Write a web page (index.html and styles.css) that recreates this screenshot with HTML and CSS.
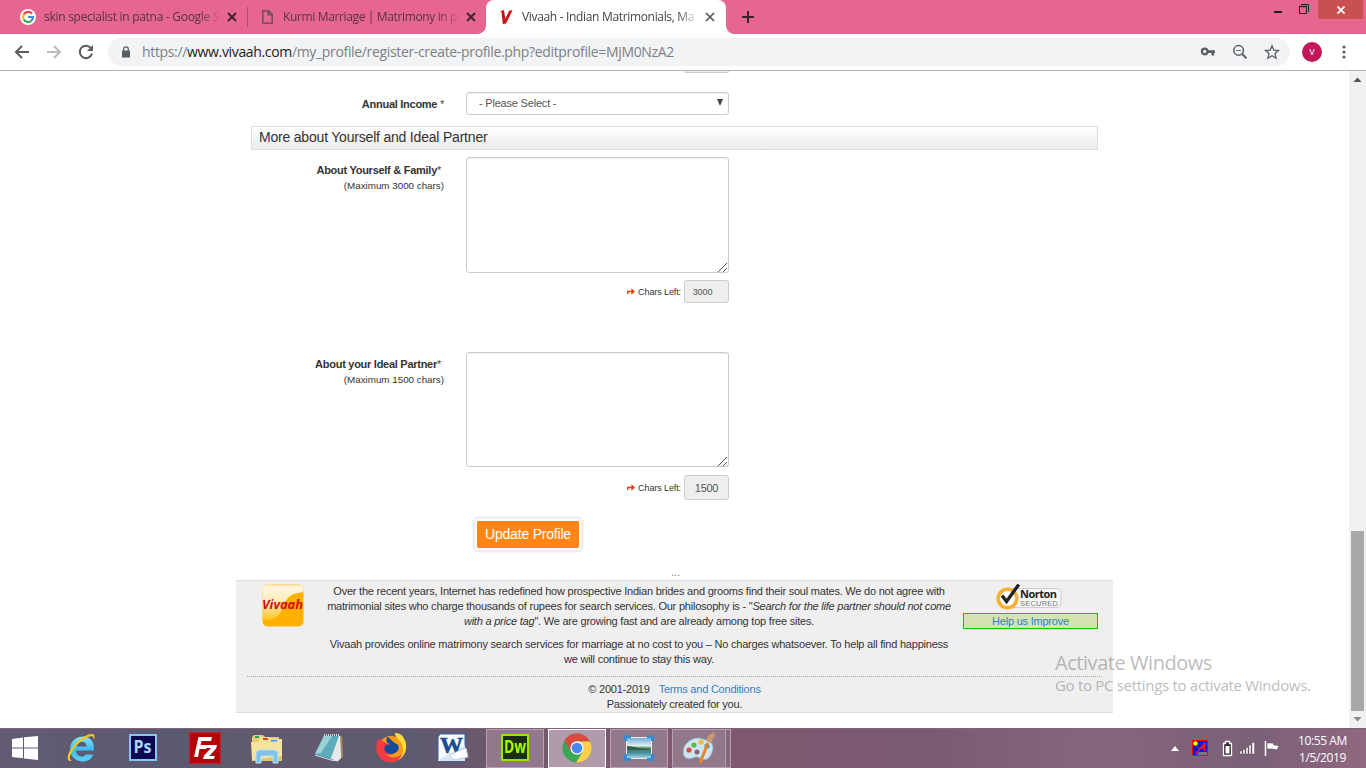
FILE: index.html
```html
<!DOCTYPE html>
<html lang="en">
<head>
<meta charset="utf-8">
<title>Vivaah - Indian Matrimonials</title>
<link rel="stylesheet" href="styles.css">
</head>
<body>
<header class="tabs">
  <div class="tab tab-one">
    <svg width="16" height="16" viewBox="0 0 16 16"><circle cx="8" cy="8" r="8" fill="#fff"/><g fill="none" stroke-width="2.2"><path d="M12 4.6A5 5 0 0 0 3.7 5.5" stroke="#ea4335"/><path d="M3.7 5.5a5 5 0 0 0 0 5" stroke="#fbbc05"/><path d="M3.7 10.5a5 5 0 0 0 7.7 1.2" stroke="#34a853"/><path d="M11.4 11.7A5 5 0 0 0 13 8H8" stroke="#4285f4"/></g></svg>
    <span class="tab-title t1">skin specialist in patna - Google S</span>
    <svg class="x" width="10" height="10" viewBox="0 0 10 10"><path d="M1 1l8 8M9 1L1 9" stroke="#3c2530" stroke-width="2"/></svg>
  </div>
  <div class="tab tab-two">
    <svg width="11" height="14" viewBox="0 0 11 14"><path d="M.8.8h5.7l3.7 3.7v8.7H.8zM6.3.8v4h4" fill="none" stroke="#5c4b53" stroke-width="1.3"/></svg>
    <span class="tab-title t2">Kurmi Marriage | Matrimony in pa</span>
    <svg class="x" width="10" height="10" viewBox="0 0 10 10"><path d="M1 1l8 8M9 1L1 9" stroke="#3c2530" stroke-width="2"/></svg>
  </div>
  <div class="tab tab-active">
    <svg width="13" height="14" viewBox="0 0 13 14"><path d="M0 1.4L4 0l1.3 8.8L9.4.6l3.1-.4L6 13.5 2.8 14 1.5 2z" fill="#d00d12"/></svg>
    <span class="tab-title t3">Vivaah - Indian Matrimonials, Ma</span>
    <svg class="x" width="10" height="10" viewBox="0 0 10 10"><path d="M1 1l8 8M9 1L1 9" stroke="#555" stroke-width="1.7"/></svg>
  </div>
  <svg class="plus" width="12" height="12" viewBox="0 0 12 12"><path d="M6 0v12M0 6h12" stroke="#38242d" stroke-width="2"/></svg>
  <div class="window-controls">
    <svg width="44" height="20" viewBox="0 0 44 20"><path d="M0 12h8" stroke="#222" stroke-width="2"/><path d="M25.5 6.500h7v7h-7z" fill="none" stroke="#222"/><path d="M25 6.500h8" stroke="#222" stroke-width="1.400"/><path d="M27 4.500h7.500V12" fill="none" stroke="#222"/></svg>
    <div class="win-close"><svg width="8" height="8" viewBox="0 0 8 8"><path d="M.5.5l7 7m0-7l-7 7" stroke="#fff" stroke-width="1.8"/></svg></div>
  </div>
</header>
<nav class="toolbar">
  <svg width="16" height="16" viewBox="0 0 16 16"><path d="M15 8H2.500M8 2L2 8l6 6" fill="none" stroke="#5a5d61" stroke-width="2"/></svg>
  <svg width="16" height="16" viewBox="0 0 16 16"><path d="M1 8h12.500M8 2l6 6-6 6" fill="none" stroke="#babcbe" stroke-width="2"/></svg>
  <svg width="16" height="16" viewBox="0 0 16 16"><path d="M13.2 4.500A6.200 6.200 0 1 0 14 9.500" fill="none" stroke="#5a5d61" stroke-width="2"/><path d="M15 1v6H9z" fill="#5a5d61"/></svg>
  <div class="omnibox">
    <svg class="lock" width="10" height="12" viewBox="0 0 10 12"><path d="M1 4.500h8V11.500H1z" fill="#5a5d61"/><path d="M2.700 5V3.200a2.300 2.300 0 0 1 4.600 0V5" fill="none" stroke="#5a5d61" stroke-width="1.3"/></svg>
    <span class="url">https://<b>www.vivaah.com</b>/my_profile/register-create-profile.php?editprofile=MjM0NzA2</span>
    <div class="box-icons">
      <svg width="16" height="16" viewBox="0 0 16 16"><circle cx="4.700" cy="7.500" r="2.800" fill="none" stroke="#5a5d61" stroke-width="2.200"/><path d="M7.500 7.600h7.500M12.800 7.600v3.800" fill="none" stroke="#5a5d61" stroke-width="2.600"/></svg>
      <svg width="16" height="16" viewBox="0 0 16 16"><circle cx="6.600" cy="6.400" r="4.800" fill="none" stroke="#5a5d61" stroke-width="1.500"/><path d="M10.200 10l4.300 4.400" stroke="#5a5d61" stroke-width="2"/><path d="M4.300 6.400h4.600" stroke="#5a5d61"/></svg>
      <svg width="16" height="16" viewBox="0 0 16 16"><path d="M8 1.800l1.800 4.300 4.700.4-3.500 3.100 1 4.600L8 11.800l-4 2.400 1-4.600-3.500-3.100 4.700-.4z" fill="none" stroke="#5a5d61" stroke-width="1.300"/></svg>
    </div>
  </div>
  <div class="avatar">v</div>
  <svg class="dots" width="4" height="14" viewBox="0 0 4 14"><g fill="#5a5d61"><circle cx="2" cy="2" r="1.600"/><circle cx="2" cy="7" r="1.600"/><circle cx="2" cy="12" r="1.600"/></g></svg>
</nav>
<div class="view">
  <main class="page">
    <form class="form">
      <div class="cut"></div>
      <div class="row income"><label>Annual Income <i>*</i></label><div class="select"><span>- Please Select -</span><svg width="6" height="7" viewBox="0 0 6 7"><path d="M0 0h6L3 7z" fill="#444"/></svg></div></div>
      <h2 class="heading"><span>More about Yourself and Ideal Partner</span></h2>
      <div class="row"><label class="area-label"><span class="l1">About Yourself &amp; Family<i>*</i></span><small>(Maximum 3000 chars)</small></label><div class="area a1"><svg width="9" height="9" viewBox="0 0 9 9"><path d="M0 9L9 0M5 9l4-4" stroke="#555"/></svg></div></div>
      <div class="chars c1"><svg width="8" height="7" viewBox="0 0 8 7"><path d="M.7 6V3.500H5" fill="none" stroke="#f4380e" stroke-width="1.400"/><path d="M4.400.300L8 3.500 4.400 6.700z" fill="#f4380e"/></svg><span>Chars Left:</span><output>3000</output></div>
      <div class="row second"><label class="area-label"><span class="l2">About your Ideal Partner<i>*</i></span><small>(Maximum 1500 chars)</small></label><div class="area a2"><svg width="9" height="9" viewBox="0 0 9 9"><path d="M0 9L9 0M5 9l4-4" stroke="#555"/></svg></div></div>
      <div class="chars c2"><svg width="8" height="7" viewBox="0 0 8 7"><path d="M.7 6V3.500H5" fill="none" stroke="#f4380e" stroke-width="1.400"/><path d="M4.400.300L8 3.500 4.400 6.700z" fill="#f4380e"/></svg><span>Chars Left:</span><output>1500</output></div>
      <button class="update" type="button"><span>Update Profile</span></button>
    </form>
    <div class="ellipsis">...</div>
    <footer class="footer">
      <div class="foot-top">
        <svg class="logo" width="42" height="44" viewBox="0 0 42 44"><defs><linearGradient id="lg" x2="0" y2="1"><stop offset="0" stop-color="#ffe0a0"/><stop offset=".1" stop-color="#fff6e0"/><stop offset=".55" stop-color="#ffe9b0"/><stop offset="1" stop-color="#ffc31c"/></linearGradient><clipPath id="lc"><rect x=".5" y=".5" width="41" height="42" rx="5"/></clipPath></defs><g clip-path="url(#lc)"><rect width="42" height="44" fill="#ffb000"/><path d="M0 0h42v8C27 9 23 16 20 25 17 34 10 37 0 36z" fill="url(#lg)"/></g><text x="0" y="24.500" class="logo-text" textLength="41" lengthAdjust="spacingAndGlyphs">Vivaah</text></svg>
        <div class="about">
          <p>Over the recent years, Internet has redefined how prospective Indian brides and grooms find their soul mates. We do not agree with<br>matrimonial sites who charge thousands of rupees for search services. Our philosophy is - "<em>Search for the life partner should not come</em><br><em>with a price tag</em>". We are growing fast and are already among top free sites.</p>
          <p>Vivaah provides online matrimony search services for marriage at no cost to you – No charges whatsoever. To help all find happiness<br>we will continue to stay this way.</p>
        </div>
        <div class="trust">
          <svg class="norton" width="66" height="26" viewBox="0 0 66 26"><path d="M12 4.500h49a4 4 0 0 1 4 4v11a4 4 0 0 1-4 4H12z" fill="#f7f7f7" stroke="#ccc"/><circle cx="11.500" cy="14.500" r="9.300" fill="#fff" stroke="#fbb034" stroke-width="3.600"/><path d="M6 11.500l4.500 6L22.800.5" fill="none" stroke="#222" stroke-width="3.300"/><text x="24" y="13.500" class="n1" textLength="37">Norton</text><text x="24" y="21.500" class="n2" textLength="38">SECURED</text></svg>
          <a class="improve">Help us Improve</a>
        </div>
      </div>
      <div class="legal"><div><span>© 2001-2019</span><a class="terms">Terms and Conditions</a></div><span>Passionately created for you.</span></div>
    </footer>
  </main>
  <aside class="scroll"><svg width="9" height="5" viewBox="0 0 9 5"><path d="M.5 5h8l-4-4.500z" fill="#505050"/></svg><div class="thumb"></div><svg width="9" height="5" viewBox="0 0 9 5"><path d="M.5 0h8l-4 4.500z" fill="#888"/></svg></aside>
</div>
<footer class="taskbar">
  <div class="start"><svg width="26" height="24" viewBox="0 0 26 24"><path d="M0 3l11-1.500V11.500H0zM12 1.300L26 0v11.500H12zM0 12.500h11v9.800L0 21zM12 12.500h14V24l-14-1.600z" fill="#fff"/></svg></div>
  <div class="app"><svg width="32" height="32" viewBox="0 0 32 32"><defs><linearGradient id="ie" x2="0" y2="1"><stop offset="0" stop-color="#8ce4ff"/><stop offset=".5" stop-color="#3cbcf0"/><stop offset="1" stop-color="#58d0f8"/></linearGradient></defs><path d="M11 18.500h17.700C30 10 25 4.500 18 4.500S5 9.500 5 17s6 12.500 12.500 12.500c5.500 0 9-2.500 10.800-7H20.500c-1 1.500-2 2-3.500 2-3.500 0-5.800-2.500-6-6zm.6-4c.7-3 2.900-4.700 5.400-4.700s4.500 1.700 4.800 4.700z" fill="url(#ie)"/><path d="M7 28.500C2 31 1 24 6 17 12 8 22 1 28 2c2 1 2 3 .8 6 .3-3-1-4.500-3.800-3.500C19 6 12 12 8 18c-4 6-4 10-1 10.500z" fill="#f9c71c"/></svg></div>
  <div class="app"><svg width="28" height="28" viewBox="0 0 28 28"><rect width="28" height="27" fill="#86c6f7"/><rect x="2" y="2" width="24" height="23" fill="#10084e"/><text class="ps" x="4.500" y="19" textLength="18" lengthAdjust="spacingAndGlyphs">Ps</text></svg></div>
  <div class="app"><svg width="32" height="32" viewBox="0 0 32 32"><rect x=".8" y=".8" width="30.400" height="30.400" fill="#b20508" stroke="#d51319" stroke-width="1.600" stroke-dasharray="2 1"/><path d="M9.500 5H23l-1 4h-9.500l-1 4H18l-1 4h-6.500L9 25H5z" fill="#fff"/><path d="M17 13h11l-.8 3.500-7 7.500h5.500l-.8 3H14l1-3.500 7-7.500h-5.800z" fill="#fff"/></svg></div>
  <div class="app"><svg width="32" height="32" viewBox="0 0 32 32"><path d="M1 5l2-2h9l2 2h14v21H1z" fill="#e8cc70"/><path d="M8 8l1-3h10l2 2h10v20H8z" fill="#f5df94"/><path d="M0 10h29l2-1v19H1z" fill="#f5e3a0"/><path d="M1 28l30-4v5H1z" fill="#e3c36c"/><path d="M4 4h4v2H4z" fill="#29a845"/><path d="M12 6h5v2h-5z" fill="#db4335"/><path d="M20 8h6v1.500h-6z" fill="#31a1e5"/><path d="M5 31V20l3-2h16l3 2v11h-5v-7H10v7z" fill="#80c2e8" stroke="#b9e5f4"/></svg></div>
  <div class="app"><svg width="32" height="32" viewBox="0 0 32 32"><path d="M26 4h3l1 21-5 4z" fill="#a98b61"/><path d="M11 4h16l1 22-3 3-7-2z" fill="#eef2f1"/><path d="M10.500 4H26l-8 23-16-5z" fill="#5dabbc"/><path d="M11 4h8L8 21l-6 1z" fill="#9cd1d7"/><path d="M11 3h16" stroke="#d8d8d8" stroke-width="2" stroke-dasharray="1 1"/><path d="M18 26L26 5l1 21-2 3z" fill="#e5e9e8"/><path d="M2 23l16 5 7 1" stroke="#d9e9ed" fill="none"/></svg></div>
  <div class="app"><svg width="32" height="32" viewBox="0 0 32 32"><circle cx="16" cy="17" r="13" fill="#ff9c16"/><path d="M3 7c-4 11-1 23 13 23 8 0 14-6 15-13-4 9-16 11-20 5 5 2 8 0 9-2-9 0-10-5-6-8-4-1-7-4-11-5z" fill="#f43b43"/><path d="M12 5c4 1 5 5 10 7 4 3 1 10-6 10-5 0-8-4-6-8 2-2 3-1 5-2-4-1-4-4-3-7z" fill="#164b9a"/><path d="M20 1c0 5 5 6 7 12 3 7-1 12-4 15 8-4 11-15 5-23-1-2-4-4-8-4z" fill="#ffde3b"/></svg></div>
  <div class="app"><svg width="32" height="30" viewBox="0 0 32 30"><path d="M3 1h25v27H1V4z" fill="#f7faff" stroke="#2c65a9"/><path d="M1 27l27-15v16H1z" fill="#dce6f3"/><text class="word" x="3" y="20" textLength="23" lengthAdjust="spacingAndGlyphs">W</text><path d="M12 22l17-7 2 9-14 3z" stroke="#bdcde2" fill="#fff"/></svg></div>
  <div class="app open"><svg width="28" height="28" viewBox="0 0 28 28"><rect width="28" height="27" fill="#96e800"/><rect x="2" y="2" width="24" height="23" fill="#1c2d14"/><text class="dw" x="3" y="19" textLength="22" lengthAdjust="spacingAndGlyphs">Dw</text></svg></div>
  <div class="app open current"><svg width="30" height="30" viewBox="0 0 30 30"><circle cx="15" cy="15" r="14.500" fill="#39a755"/><path d="M2.500 7.500A14.500 14.500 0 0 1 28 8.500H15L9 19z" fill="#db4a3e"/><path d="M28 8.500A14.500 14.500 0 0 1 14 29.500L21 18.500 15 8.500z" fill="#ffd14b"/><circle cx="15" cy="15" r="6.700" fill="#f5f5f5"/><circle cx="15" cy="15" r="5.300" fill="#4687ef"/></svg></div>
  <div class="app open"><svg width="30" height="28" viewBox="0 0 30 28"><defs><linearGradient id="photo" x2="0" y2="1"><stop stop-color="#68abd8"/><stop offset=".4" stop-color="#e2f1ee"/><stop offset=".5" stop-color="#547f60"/><stop offset=".7" stop-color="#3e8797"/><stop offset="1" stop-color="#a6dce5"/></linearGradient></defs><path d="M2.500 3.500h25v21h-25z" fill="url(#photo)" stroke="#eee"/><path d="M3 12c7 0 12 3 19 3l5 1H3z" fill="#315f44"/><path d="M1.500 7V2.500H7M23 2.500h5.500V7M1.500 20v5.500H7M23 25.500h5.500V20" stroke="#398bd0" stroke-width="3" fill="none"/></svg></div>
  <div class="app open paint"><svg width="32" height="32" viewBox="0 0 32 32"><path d="M20 7C11 3 0 11 0 20c0 6 5 8 10 6 4-2 5-1 8 1 6 3 11-3 12-10 1-6-4-9-10-10z" fill="#cee5f0" stroke="#82aec6"/><circle cx="6" cy="18" r="2.600" fill="#dd4b45"/><circle cx="11" cy="13" r="2.600" fill="#65b84e"/><circle cx="18" cy="10" r="2.600" fill="#efbd38"/><circle cx="24" cy="14" r="2.600" fill="#3d91d0"/><circle cx="14" cy="20" r="2.500" fill="#806578"/><path d="M25 11L17 31" stroke="#e78528" stroke-width="3"/><path d="M23 9l3-6 5-3 1 3-4 8z" fill="#c99a70"/></svg></div>
  <div class="stack"></div>
  <div class="tray">
    <svg class="up" width="8" height="5" viewBox="0 0 8 5"><path d="M0 5h8L4 0z" fill="#fff"/></svg>
    <svg class="red-icon" width="16" height="16" viewBox="0 0 16 16"><path d="M.5.5h15v15H.5z" fill="#1010e8" stroke="#f00"/><circle cx="3.500" cy="3.500" r="2.300" fill="#ff0"/><path d="M5 15h10v-3H7z" fill="#777"/><path d="M5 6l3 2 4-5h2.500l-1.500 5 1 3h-2l-1-3-3 2-3 4H3l4-5z" fill="#f11"/></svg>
    <svg class="battery" width="11" height="17" viewBox="0 0 11 17"><path d="M1.500 3.500h2v-2h4v2h2v12h-8z" fill="#332c32" stroke="#fff" stroke-width="1.300"/><path d="M3.500 6h4v7.500h-4z" fill="#fff"/></svg>
    <svg class="signal" width="17" height="14" viewBox="0 0 17 14"><path d="M1 10h2v3H1zM4 8.500h2V13H4zM7 6.500h2V13H7zM10 4h2v9h-2zM13 1.500h2.500V13H13z" fill="#fff" stroke="#50404e" stroke-width=".4"/></svg>
    <svg class="flag" width="16" height="15" viewBox="0 0 16 15"><path d="M1.500 0v15" stroke="#fff" stroke-width="1.500"/><path d="M3 2h6l1 2 5 .5-2 4.500-4-1H3z" fill="#fff" stroke="#50404e" stroke-width=".5"/></svg>
    <div class="clock"><span>10:55 AM</span><span>1/5/2019</span></div>
  </div>
</footer>
<div class="watermark"><div class="w1">Activate Windows</div><div class="w2">Go to PC settings to activate Windows.</div></div>
</body>
</html>
```
FILE: styles.css
```css
* { box-sizing: border-box; }
body { margin: 0; width: 1366px; height: 768px; overflow: hidden; display: flex; flex-direction: column; background: #fff; color: #333; font-family: "Liberation Sans", Arial, sans-serif; }
svg { display: block; flex: none; }

.tabs { height: 34px; display: flex; align-items: flex-start; background: #e66690; font-family: "Open Sans", sans-serif; }
.tab { height: 34px; display: flex; align-items: center; font-size: 12px; color: #563543; }
.tab-one { width: 248px; padding-left: 20px; background: linear-gradient(#9c5871, #9c5871) 247px 7px / 1px 20px no-repeat; }
.tab-two { width: 238px; padding-left: 14px; }
.tab-active { width: 240px; padding-left: 14px; background: #fff; border-radius: 8px 8px 0 0; color: #444; position: relative; }
.tab-active::before, .tab-active::after { content: ""; position: absolute; bottom: 0; width: 8px; height: 8px; }
.tab-active::before { left: -8px; background: radial-gradient(circle at 0 0, #e66690 7.500px, #fff 8px); }
.tab-active::after { right: -8px; background: radial-gradient(circle at 100% 0, #e66690 7.500px, #fff 8px); }
.tab-title { width: 176px; margin-right: -1px; white-space: nowrap; line-height: 18px; -webkit-mask-image: linear-gradient(90deg, #000 155px, transparent 178px); }
.t1 { margin-left: 8px; letter-spacing: -.28px; }
.t2 { margin-left: 10px; letter-spacing: -.36px; }
.t3 { margin-left: 9px; letter-spacing: -.33px; }
.x { margin-left: 8px; }
.plus { margin: 11px 0 0 16px; }
.window-controls { margin-left: auto; margin-right: 3px; display: flex; }
.win-close { width: 45px; height: 19px; background: #c75050; display: grid; place-items: center; }

.toolbar { height: 37px; border-bottom: 1px solid #b6b4b6; display: flex; align-items: center; gap: 16px; padding-left: 14px; background: #fff; }
.omnibox { width: 1182px; height: 28px; margin-left: -2px; border-radius: 14px; background: #f1f3f4; display: flex; align-items: center; padding: 0 10px 0 13px; }
.url { margin-left: 11px; font-family: "Open Sans", sans-serif; font-size: 14px; line-height: 20px; letter-spacing: -.34px; color: #7d8185; white-space: nowrap; }
.url b { color: #222; font-weight: 400; }
.box-icons { margin-left: auto; display: flex; gap: 16px; }
.avatar { width: 20px; height: 20px; margin-left: -4px; border-radius: 50%; background: #c2185b; color: #fff; text-align: center; font: 10px/18px "Open Sans", sans-serif; }
.dots { margin-left: 4px; }

.view { height: 657px; display: flex; }
.page { width: 1349px; }
.form { width: 847px; height: 498px; margin-left: 251px; display: flex; flex-direction: column; }
.cut { width: 45px; height: 2px; margin-left: 433px; border: 1px solid #ccc; border-top: 0; border-radius: 0 0 3px 3px; background: #eee; }
.row { display: flex; }
.row label { width: 193px; margin-right: 22px; text-align: right; font-size: 11px; font-weight: 700; letter-spacing: -.27px; white-space: nowrap; }
label i { color: #444; font-style: normal; font-weight: 400; }
.income { margin-top: 19px; height: 23px; }
.income label { line-height: 24px; }
.select { width: 263px; height: 23px; border: 1px solid #ccc; border-radius: 3px; padding: 0 5px 2px 12px; display: flex; align-items: center; justify-content: space-between; font-size: 11px; letter-spacing: -.2px; color: #555; box-shadow: inset 0 1px 1px #eee; }
.heading { height: 24px; margin: 11px 0 7px; border: 1px solid #ddd; background: linear-gradient(#fff, #ebebeb); padding-left: 7px; font-size: 14px; line-height: 21px; font-weight: 400; letter-spacing: -.2px; }
.row .area-label { display: flex; flex-direction: column; line-height: 15px; padding-top: 6px; }
.l1, .l2 { padding-right: 3px; }
.area-label small { font-weight: 400; font-size: 9.800px; line-height: 15px; letter-spacing: 0; }
.area { width: 263px; border: 1px solid #ccc; border-radius: 3px; box-shadow: inset 0 1px 1px #eee; display: flex; align-items: flex-end; justify-content: flex-end; padding: 0 1px; }
.a1 { height: 116px; }
.a2 { height: 115px; }
.chars { width: 478px; margin-top: 7px; height: 23px; display: flex; align-items: center; justify-content: flex-end; font-size: 9px; letter-spacing: -.1px; }
.chars span { margin: 0 3px 0 3px; }
.chars output { width: 45px; height: 100%; border: 1px solid #ccc; border-radius: 3px; background: #eee; color: #555; display: grid; place-items: center; }
.c1 output { padding-right: 8px; }
.second { margin-top: 49px; }
.second .area-label { padding-top: 5px; }
.c2 { margin-top: 8px; height: 25px; }
.c2 output { font-size: 11px; letter-spacing: -.3px; }
.update { width: 108px; height: 33px; margin: 18px 0 0 223px; border: 3px solid #fff; outline: 1px solid #eee; outline-offset: -1px; box-shadow: 0 0 3px #ccc; border-radius: 4px; background: #ff8614; background-clip: padding-box; color: #fff; padding: 0 0 2px; font: 14px/20px "Liberation Sans", Arial, sans-serif; letter-spacing: -.2px; white-space: nowrap; }
.ellipsis { width: 877px; height: 11px; margin-left: 237px; text-align: center; font-size: 11px; line-height: 6px; color: #777; }
.footer { width: 877px; height: 133px; margin-left: 236px; border: solid #ddd; border-width: 1px 0; background: #efefef; font-size: 11px; line-height: 15px; letter-spacing: -.22px; }
.foot-top { height: 96px; margin: 0 11px; padding: 3px 4px 0 15px; border-bottom: 1px dotted #aaa; display: flex; }
.logo { letter-spacing: 0; }
.logo-text { font: italic 700 13px "Open Sans", sans-serif; fill: #d20a0c; }
.about { width: 626px; margin-left: 22px; text-align: center; white-space: nowrap; }
.about p { margin: 0 0 8px; }
.trust { margin-left: 11px; width: 135px; display: flex; flex-direction: column; align-items: center; }
.norton { margin-right: 3px; letter-spacing: 0; }
.n1 { font: 700 11px "Open Sans", sans-serif; fill: #222; }
.n2 { font: 7.500px "Liberation Sans", sans-serif; fill: #777; }
.improve { width: 135px; height: 16px; margin-top: 3px; border: 1px solid #0c0; background: #d4e3b1; text-align: center; line-height: 15px; }
a { color: #337fc8; }
.legal { height: 35px; padding-top: 5px; text-align: center; line-height: 15px; }
.terms { margin-left: 9px; }
.scroll { width: 17px; background: #f1f1f1; display: flex; flex-direction: column; align-items: center; padding: 6px 0; }
.thumb { width: 13px; height: 180px; margin: 449px 0 6px; background: #a8a8a8; }

.taskbar { height: 40px; display: flex; align-items: center; background: linear-gradient(90deg, #635b74, #5b5970 12%, #625a6e 22%, #5c5a70 30%, #73586c 38%, #80586e 50%, #795a72 68%, #85667e 80%, #7b6077 92%, #90687f); box-shadow: inset 0 1px #7c6579; }
.start { width: 50px; padding-left: 12px; }
.app { width: 62px; height: 40px; display: grid; place-items: center; }
.open { width: 58px; height: 39px; margin: 0 2px; border: 1px solid #b9a0ae; background: #92788a; }
.current { border: 1px solid #fff; background: #af9baa; }
.paint { width: 54px; margin-right: 0; }
.stack { width: 5px; height: 39px; border: 1px solid #b9a0ae; border-left: 0; background: #85697b; }
.tray { margin-left: auto; display: flex; align-items: center; padding-right: 18px; }
.red-icon { margin-left: 13px; }
.battery { margin-left: 14px; }
.signal { margin-left: 6px; }
.flag { margin-left: 8px; }
.clock { width: 51px; margin-left: 17px; padding-top: 1px; display: flex; flex-direction: column; align-items: center; color: #fff; font: 12px/17px "Open Sans", sans-serif; white-space: nowrap; letter-spacing: -.4px; }
.ps, .dw { font: 700 17px "Open Sans", sans-serif; fill: #a5d7ff; }
.dw { fill: #a4fa00; }
.word { font: 700 24px "Liberation Serif", serif; fill: #174c91; stroke: #174c91; stroke-width: .6px; }
.watermark { position: absolute; left: 1055px; top: 650px; color: rgba(120, 120, 120, .5); font-family: "Open Sans", sans-serif; white-space: nowrap; }
.w1 { font-size: 20px; line-height: 25px; letter-spacing: -.45px; }
.w2 { font-size: 15px; line-height: 20px; letter-spacing: -.3px; }
```
